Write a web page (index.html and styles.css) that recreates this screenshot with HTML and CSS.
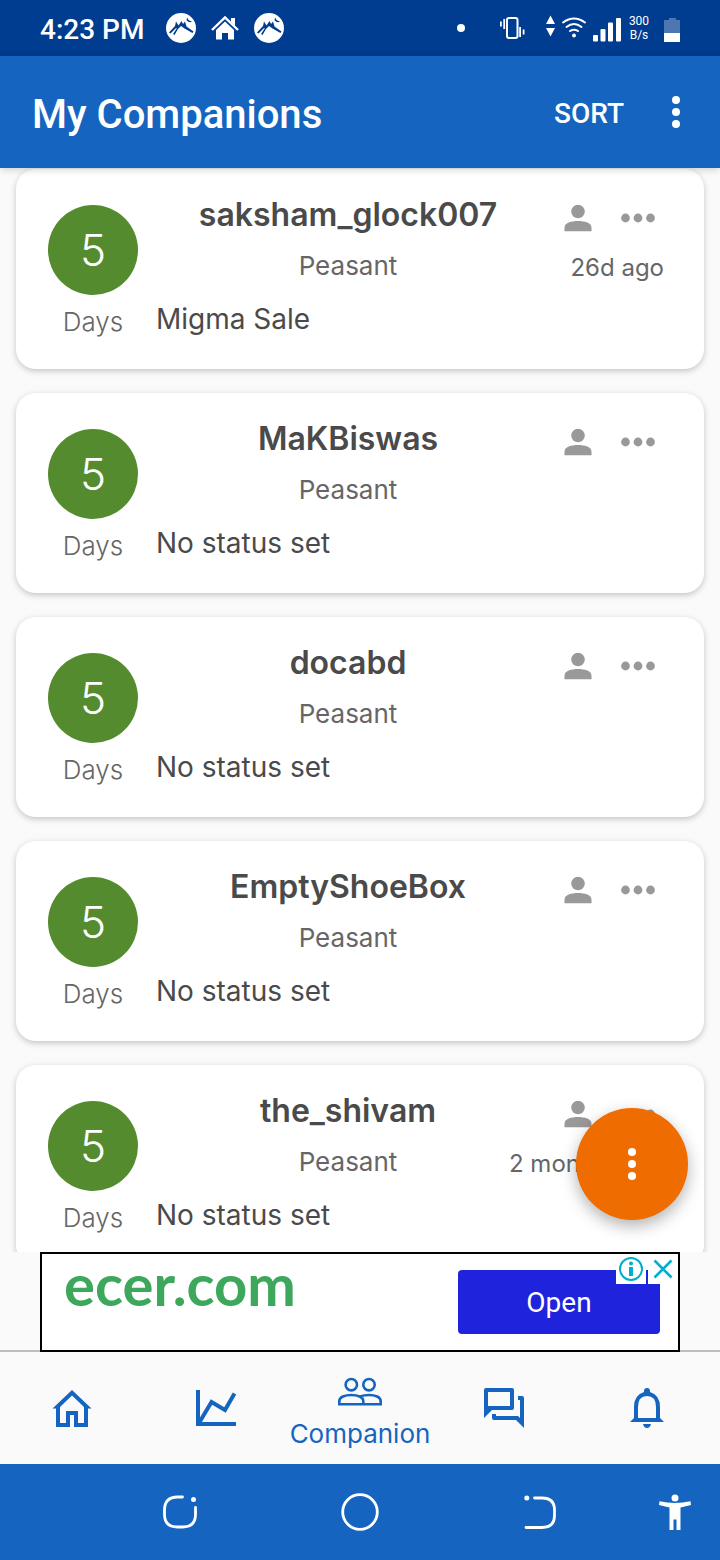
FILE: index.html
```html
<!DOCTYPE html>
<html lang="en">
<head>
<meta charset="utf-8">
<meta name="viewport" content="width=device-width, initial-scale=1">
<title>My Companions</title>
<link rel="stylesheet" href="styles.css">
</head>
<body>
<svg class="defs" aria-hidden="true">
  <symbol id="peak" viewBox="0 0 30 30">
    <circle cx="15" cy="15" r="15" fill="#fff"/>
    <path d="M3 19.500L9 13L10 8.500L12.500 12.500L15.500 8L17 11L19 8.500L20.500 13.500L27.500 18.500L26.500 20L18.500 15.500L15 13L12 16L8.500 22L7 21L11 15L9.500 15.500L4.500 20.500Z" fill="#003c8f"/>
    <path d="M21.500 4.500a2.800 2.800 0 1 0 4.500 3.300a3.400 3.400 0 0 1-4.500-3.300z" fill="#003c8f"/>
  </symbol>
  <symbol id="person" viewBox="0 0 28 28">
    <circle cx="14" cy="7.500" r="6.800"/>
    <path d="M.5 27.300V23.500C.5 19 7 17 14 17s13.500 2 13.500 6.500v3.800z"/>
  </symbol>
  <symbol id="dots" viewBox="0 0 34 10">
    <circle cx="4.500" cy="5" r="4.400"/><circle cx="17" cy="5" r="4.400"/><circle cx="29.500" cy="5" r="4.400"/>
  </symbol>
  <symbol id="more" viewBox="0 0 8 32">
    <circle cx="4" cy="4" r="4"/><circle cx="4" cy="16" r="4"/><circle cx="4" cy="28" r="4"/>
  </symbol>
</svg>

<div class="status-bar">
  <span class="clock">4:23 PM</span>
  <svg class="peak" aria-hidden="true"><use href="#peak"/></svg>
  <svg class="house" viewBox="0 0 28 26" aria-hidden="true"><path d="M1 15L14 2.500L27 15" fill="none" stroke="#fff" stroke-width="2.400"/><path d="M20 3h4v8l-4-4zM5 15L14 6.500L23 15v9.500h-6V18h-6v6.500H5z" fill="#fff"/></svg>
  <svg class="peak" aria-hidden="true"><use href="#peak"/></svg>
  <svg class="signals" viewBox="457 12 165 32" aria-hidden="true">
    <g fill="#fff">
      <circle cx="461" cy="28" r="4"/>
      <path d="M500 21.500h1.800v5H500zM503.300 19h1.800v10h-1.800zM519.200 27h1.800v10h-1.800zM522.700 29.500h1.800v5h-1.800z"/>
      <path d="M546 24L550.500 15.500L555 24zM546 28L550.500 36.500L555 28z"/>
      <circle cx="574" cy="35.500" r="1.900"/>
      <rect x="593" y="35" width="5" height="6.500" rx="1"/><rect x="600.500" y="29" width="5" height="12.500" rx="1"/><rect x="608" y="22.500" width="5" height="19" rx="1"/><rect x="616" y="18" width="5" height="23.500" rx="1"/>
    </g>
    <g fill="none" stroke="#fff" stroke-width="2" stroke-linecap="round">
      <rect x="507" y="18" width="10.500" height="20" rx="2"/>
      <path d="M563 22.500Q574 14.500 585 22.500M566.500 27Q574 21 581.500 27M570 31Q574 28.500 578 31"/>
    </g>
  </svg>
  <span class="rate">300<br>B/s</span>
  <svg class="battery" viewBox="0 0 16 24" aria-hidden="true"><path d="M5 0h7v2h4v14H0V2h5z" fill="#4d77b1"/><path d="M0 15h16v9H0z" fill="#fff"/></svg>
</div>

<header class="app-bar">
  <h1 class="title">My Companions</h1>
  <button class="sort" type="button">SORT</button>
  <button class="overflow" type="button" aria-label="More options"><svg class="more"><use href="#more"/></svg></button>
</header>

<main class="content">
  <div class="list">
    <article class="card">
      <div class="streak"><span class="count">5</span><span class="unit">Days</span></div>
      <h2 class="name">saksham_glock007</h2>
      <div class="actions"><button type="button" aria-label="Profile"><svg class="person"><use href="#person"/></svg></button><button type="button" aria-label="Options"><svg class="dots"><use href="#dots"/></svg></button></div>
      <p class="rank">Peasant</p><p class="time">26d ago</p>
      <p class="note">Migma Sale</p>
    </article>
    <article class="card">
      <div class="streak"><span class="count">5</span><span class="unit">Days</span></div>
      <h2 class="name">MaKBiswas</h2>
      <div class="actions"><button type="button" aria-label="Profile"><svg class="person"><use href="#person"/></svg></button><button type="button" aria-label="Options"><svg class="dots"><use href="#dots"/></svg></button></div>
      <p class="rank">Peasant</p>
      <p class="note">No status set</p>
    </article>
    <article class="card">
      <div class="streak"><span class="count">5</span><span class="unit">Days</span></div>
      <h2 class="name">docabd</h2>
      <div class="actions"><button type="button" aria-label="Profile"><svg class="person"><use href="#person"/></svg></button><button type="button" aria-label="Options"><svg class="dots"><use href="#dots"/></svg></button></div>
      <p class="rank">Peasant</p>
      <p class="note">No status set</p>
    </article>
    <article class="card">
      <div class="streak"><span class="count">5</span><span class="unit">Days</span></div>
      <h2 class="name">EmptyShoeBox</h2>
      <div class="actions"><button type="button" aria-label="Profile"><svg class="person"><use href="#person"/></svg></button><button type="button" aria-label="Options"><svg class="dots"><use href="#dots"/></svg></button></div>
      <p class="rank">Peasant</p>
      <p class="note">No status set</p>
    </article>
    <article class="card">
      <div class="streak"><span class="count">5</span><span class="unit">Days</span></div>
      <h2 class="name">the_shivam</h2>
      <div class="actions"><button type="button" aria-label="Profile"><svg class="person"><use href="#person"/></svg></button><button type="button" aria-label="Options"><svg class="dots"><use href="#dots"/></svg></button></div>
      <p class="rank">Peasant</p><p class="time">2 months ago</p>
      <p class="note">No status set</p>
    </article>
  </div>
  <button class="fab" type="button" aria-label="Actions"><svg class="more"><use href="#more"/></svg></button>
</main>

<aside class="ad-slot">
  <div class="ad">
    <span class="brand">ecer.com</span>
    <button class="open" type="button">Open</button>
    <div class="ad-controls">
      <button type="button" aria-label="Ad information"><svg viewBox="0 0 30 30"><circle cx="15" cy="15" r="11" fill="none" stroke="#00aecd" stroke-width="2"/><circle cx="15" cy="9.500" r="2" fill="#00aecd"/><path d="M13 13h4v9h-4z" fill="#00aecd"/></svg></button>
      <button type="button" aria-label="Close ad"><svg viewBox="0 0 30 30"><path d="M6.500 6.500l17 17M23.500 6.500l-17 17" stroke="#00aecd" stroke-width="2.600"/></svg></button>
    </div>
  </div>
</aside>

<nav class="tabs">
  <a href="#home" aria-label="Home"><svg class="tab-icon" viewBox="0 0 48 48"><path d="M24 5L4.500 23.500H8V42h14V30h4v12h14V23.500h3.500zM24 10.500L36 22v16h-6V26H18v12h-6V22z" fill="#1565c0" fill-rule="evenodd"/></svg></a>
  <a href="#stats" aria-label="Statistics"><svg class="tab-icon" viewBox="0 0 48 48"><path d="M6 5v34h38M7 38L19.500 17L33 25L42.500 8.500" fill="none" stroke="#1565c0" stroke-width="4"/></svg></a>
  <a class="current" href="#companion"><svg class="group" viewBox="0 0 48 32" aria-hidden="true"><g fill="none" stroke="#1565c0" stroke-width="2.600"><circle cx="15.300" cy="8.700" r="5.700"/><circle cx="33" cy="8.700" r="5.700"/><path d="M3.300 28.300V25C3.300 21 9 19 15.300 19s12 2 12 6v3.300zM24 20.500Q28 19 33 19c6 0 11.700 2 11.700 6v3.300H27"/></g></svg>Companion</a>
  <a href="#chat" aria-label="Chat"><svg class="tab-icon" viewBox="0 0 48 48"><path d="M6 3h26a2 2 0 0 1 2 2v18a2 2 0 0 1-2 2H12l-8 8V5a2 2 0 0 1 2-2zM8 7v14h22V7zM38 11h4a2 2 0 0 1 2 2v30l-8-8H14a2 2 0 0 1-2-2v-4h4v2h22l2 2V15h-2z" fill="#1565c0" fill-rule="evenodd"/></svg></a>
  <a href="#alerts" aria-label="Notifications"><svg class="tab-icon" viewBox="0 0 48 48"><path d="M20 6a3 3 0 0 1 6 0v1q10 3 10 15v11l4 4H6l4-4V22Q10 10 20 7zM14 33h18V22q0-11-9-11t-9 11z" fill="#1565c0" fill-rule="evenodd"/><path d="M19 39h8q-1 4-4 4t-4-4z" fill="#1565c0"/></svg></a>
</nav>

<div class="system-nav">
  <button type="button" aria-label="Recent apps"><svg viewBox="0 0 40 40"><path d="M22.500 5h-5Q4.500 5 4.500 18v4.500q0 12.500 13 12.500h5q13 0 13-12.500v-7" fill="none" stroke="#fff" stroke-width="2.800" stroke-linecap="round"/><circle cx="33.500" cy="7.500" r="2.500" fill="#fff"/></svg></button>
  <button type="button" aria-label="Home"><svg viewBox="0 0 40 40"><circle cx="20" cy="20" r="17.300" fill="none" stroke="#fff" stroke-width="2.800"/></svg></button>
  <button type="button" aria-label="Back"><svg viewBox="0 0 40 40"><path d="M14.500 6H22q12.500 0 12.500 12v5.500q0 12-12.500 12H6" fill="none" stroke="#fff" stroke-width="2.800" stroke-linecap="round"/><circle cx="6.800" cy="6" r="2.500" fill="#fff"/></svg></button>
  <button type="button" aria-label="Accessibility"><svg viewBox="0 0 40 40"><circle cx="20" cy="6" r="3.500" fill="#fff"/><path d="M4.500 9.300Q20 12.500 35.500 9.300L36 13L25.500 15.500V38h-4V27.500h-3V38h-4V15.500L4 13z" fill="#fff"/></svg></button>
</div>
</body>
</html>
```
FILE: styles.css
```css
* { box-sizing: border-box; }

body {
  margin: 0;
  height: 100vh;
  display: flex;
  flex-direction: column;
  background: #fafafa;
  font-family: Inter, "Noto Sans", sans-serif;
  color: #4a4a4a;
}

button {
  display: flex;
  align-items: center;
  justify-content: center;
  margin: 0;
  padding: 0;
  border: 0;
  background: none;
  font: inherit;
  color: inherit;
}

h1, h2, p { margin: 0; }
svg { display: block; flex: none; }
.defs { position: absolute; width: 0; height: 0; }

.status-bar {
  flex: none;
  display: flex;
  align-items: center;
  height: 56px;
  padding: 0 40px;
  background: #003c8f;
  color: #fff;
  font-family: Roboto, sans-serif;
}
.clock { margin-right: 22px; padding-top: 2px; font-size: 28px; font-weight: 500; white-space: nowrap; }
.peak { width: 30px; height: 30px; }
.house { width: 28px; height: 26px; margin: 0 15px; }
.signals { width: 165px; height: 32px; margin-left: auto; }
.rate { width: 22px; margin: 0 14px 0 6px; font-size: 12px; line-height: 14px; text-align: center; }
.battery { width: 16px; height: 24px; margin-top: 4px; }

.app-bar {
  flex: none;
  position: relative;
  z-index: 1;
  display: flex;
  align-items: center;
  height: 112px;
  padding: 0 24px 0 32px;
  background: #1565c0;
  color: #fff;
  font-family: Roboto, sans-serif;
  box-shadow: 0 1px 8px rgba(0, 0, 0, 0.2);
}
.title { flex: 1; padding-top: 4px; font-size: 40px; font-weight: 500; }
.sort { margin-right: 32px; padding-top: 2px; font-size: 28px; font-weight: 500; }
.overflow { width: 40px; height: 48px; }
.more { width: 8px; height: 32px; fill: #fff; }

.content { flex: 1; min-height: 0; position: relative; }
.list {
  height: 100%;
  overflow-y: auto;
  scrollbar-width: none;
  display: flex;
  flex-direction: column;
  gap: 24px;
  padding: 1px 16px;
}
.card {
  flex: none;
  display: grid;
  grid-template-columns: 90px 1fr 114px;
  grid-template-rows: 52px 52px 52px;
  column-gap: 18px;
  align-items: center;
  padding: 20px 32px 24px;
  border-radius: 20px;
  background: #fff;
  box-shadow: 0 2px 6px rgba(0, 0, 0, 0.22);
}
.streak {
  grid-column: 1;
  grid-row: 1 / 4;
  align-self: start;
  display: flex;
  flex-direction: column;
  align-items: center;
  height: 156px;
  padding-top: 16px;
}
.count {
  flex: none;
  width: 90px;
  height: 90px;
  border-radius: 50%;
  background: #558b2f;
  color: #fff;
  font-size: 44px;
  font-weight: 300;
  line-height: 90px;
  text-align: center;
}
.unit { font-size: 26px; font-weight: 300; line-height: 54px; color: #666; }
.name { grid-column: 2; grid-row: 1; font-size: 32px; font-weight: 600; line-height: 52px; text-align: center; white-space: nowrap; }
.actions { grid-column: 3; grid-row: 1; display: flex; gap: 20px; padding-top: 6px; fill: #999; }
.actions button { width: 40px; height: 46px; }
.person { width: 28px; height: 28px; }
.dots { width: 34px; height: 10px; }
.rank { grid-column: 2; grid-row: 2; padding-bottom: 4px; font-size: 26px; text-align: center; color: #666; }
.time { grid-column: 3; grid-row: 2; justify-self: end; padding-right: 8px; font-size: 24px; white-space: nowrap; color: #666; }
.note { grid-column: 2 / 4; grid-row: 3; font-size: 28px; }

.fab {
  position: absolute;
  right: 32px;
  bottom: 32px;
  width: 112px;
  height: 112px;
  border-radius: 50%;
  background: #ef6c00;
  box-shadow: 0 6px 16px rgba(0, 0, 0, 0.3);
}

.ad-slot {
  flex: none;
  position: relative;
  padding: 0 40px;
  background: #fafafa;
  box-shadow: inset 0 -2px #bdbdbd;
}
.ad {
  position: relative;
  display: flex;
  justify-content: space-between;
  align-items: center;
  height: 100px;
  padding: 0 18px 0 22px;
  border: 2px solid #000;
  background: #fff;
}
.brand {
  align-self: flex-start;
  font-family: Lato, sans-serif;
  font-size: 58px;
  font-weight: 700;
  line-height: 60px;
  color: #3da75c;
}
.open {
  width: 202px;
  height: 64px;
  border-radius: 4px;
  background: #1f23db;
  color: #fff;
  font-family: Roboto, sans-serif;
  font-size: 28px;
}
.ad-controls { position: absolute; top: 0; right: 0; display: flex; gap: 2px; }
.ad-controls button { width: 30px; height: 30px; background: #fff; }
.ad-controls svg { width: 30px; height: 30px; }

.tabs {
  flex: none;
  display: grid;
  grid-template-columns: repeat(5, 1fr);
  height: 112px;
  background: #fafafa;
}
.tabs a {
  display: flex;
  flex-direction: column;
  align-items: center;
  justify-content: center;
  padding-top: 2px;
  color: #1565c0;
  font-size: 26px;
  line-height: 36px;
  text-decoration: none;
}
.tabs .current { justify-content: flex-start; gap: 8px; padding-top: 24px; }
.tab-icon { width: 48px; height: 48px; }
.group { width: 48px; height: 32px; }

.system-nav {
  flex: none;
  display: grid;
  grid-template-columns: 1fr 1fr 1fr 90px;
  height: 96px;
  padding-left: 90px;
  background: #1565c0;
}
.system-nav svg { width: 40px; height: 40px; }
```
